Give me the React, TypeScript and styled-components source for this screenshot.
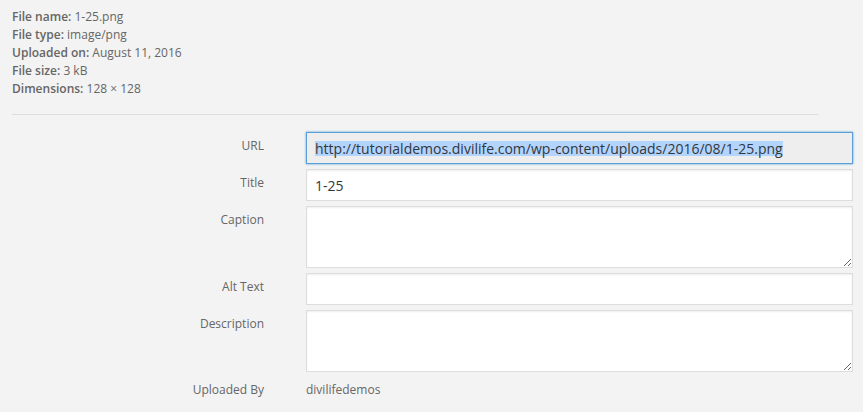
import React from 'react';
import styled, { createGlobalStyle } from 'styled-components';

const GlobalStyle = createGlobalStyle`
  html, body {
    margin: 0;
    padding: 0;
    background: #f3f3f3;
  }
  body {
    font-family: "Open Sans", "Liberation Sans", sans-serif;
    color: #666;
  }
`;

const meta = [
  { label: 'File name:', value: '1-25.png' },
  { label: 'File type:', value: 'image/png' },
  { label: 'Uploaded on:', value: 'August 11, 2016' },
  { label: 'File size:', value: '3 kB' },
  { label: 'Dimensions:', value: '128 × 128' },
];

const fileUrl =
  'http://tutorialdemos.divilife.com/wp-content/uploads/2016/08/1-25.png';

const App = () => {
  return (
    <Page>
      <GlobalStyle />
      <Details>
        {meta.map((m) => (
          <MetaLine key={m.label}>
            <strong>{m.label}</strong> {m.value}
          </MetaLine>
        ))}
      </Details>
      <Divider />
      <Settings>
        <Row>
          <Label>URL</Label>
          <UrlField>
            <Selected>{fileUrl}</Selected>
          </UrlField>
        </Row>
        <Row>
          <Label>Title</Label>
          <TextInput defaultValue="1-25" />
        </Row>
        <Row>
          <Label>Caption</Label>
          <TextArea />
        </Row>
        <Row>
          <Label>Alt Text</Label>
          <TextInput defaultValue="" />
        </Row>
        <Row>
          <Label>Description</Label>
          <TextArea />
        </Row>
        <Row>
          <Label $top={4}>Uploaded By</Label>
          <Value>divilifedemos</Value>
        </Row>
      </Settings>
    </Page>
  );
};

export default App;

const Page = styled.div`
  width: 863px;
  height: 412px;
  overflow: hidden;
  padding: 8px 0 0 12px;
  box-sizing: border-box;
`;

const Details = styled.div`
  display: flex;
  flex-direction: column;
`;

const MetaLine = styled.div`
  font-size: 12px;
  line-height: 18px;
  color: #666;

  & strong {
    font-weight: 600;
  }
`;

const Divider = styled.div`
  width: 806px;
  margin: 16px 0 17px;
  border-top: 1px solid #ddd;
`;

const Settings = styled.div`
  display: flex;
  flex-direction: column;
  gap: 5px;
  margin-left: -12px;
`;

const Row = styled.div`
  display: grid;
  grid-template-columns: 264px 547px;
  column-gap: 42px;
  align-items: start;
`;

const Label = styled.div<{ $top?: number }>`
  text-align: right;
  font-size: 12px;
  line-height: 18px;
  padding-top: ${({ $top }) => ($top ?? 5)}px;
  color: #666;
`;

const fieldBase = `
  box-sizing: border-box;
  width: 547px;
  border: 1px solid #ddd;
  background: #fff;
  box-shadow: inset 0 1px 2px rgba(0, 0, 0, 0.07);
  font-family: "Open Sans", "Liberation Sans", sans-serif;
  font-size: 14px;
  color: #32373c;
  padding: 0 8px;
  margin: 0;
  outline: none;
  border-radius: 0;
`;

const TextInput = styled.input`
  ${fieldBase}
  height: 32px;
`;

const TextArea = styled.textarea`
  ${fieldBase}
  height: 62px;
  resize: vertical;
  display: block;
`;

const UrlField = styled.div`
  ${fieldBase}
  height: 32px;
  background: #eee;
  border-color: #5b9dd9;
  box-shadow: 0 0 2px rgba(30, 140, 190, 0.8);
  display: flex;
  align-items: center;
  white-space: nowrap;
  overflow: hidden;
  padding-left: 8px;
`;

const Selected = styled.span`
  background: #b3d4fc;
  line-height: 15px;
  display: inline-block;
  font-size: 14px;
  color: #32373c;
`;

const Value = styled.div`
  font-size: 12px;
  line-height: 18px;
  padding-top: 4px;
  color: #666;
`;
